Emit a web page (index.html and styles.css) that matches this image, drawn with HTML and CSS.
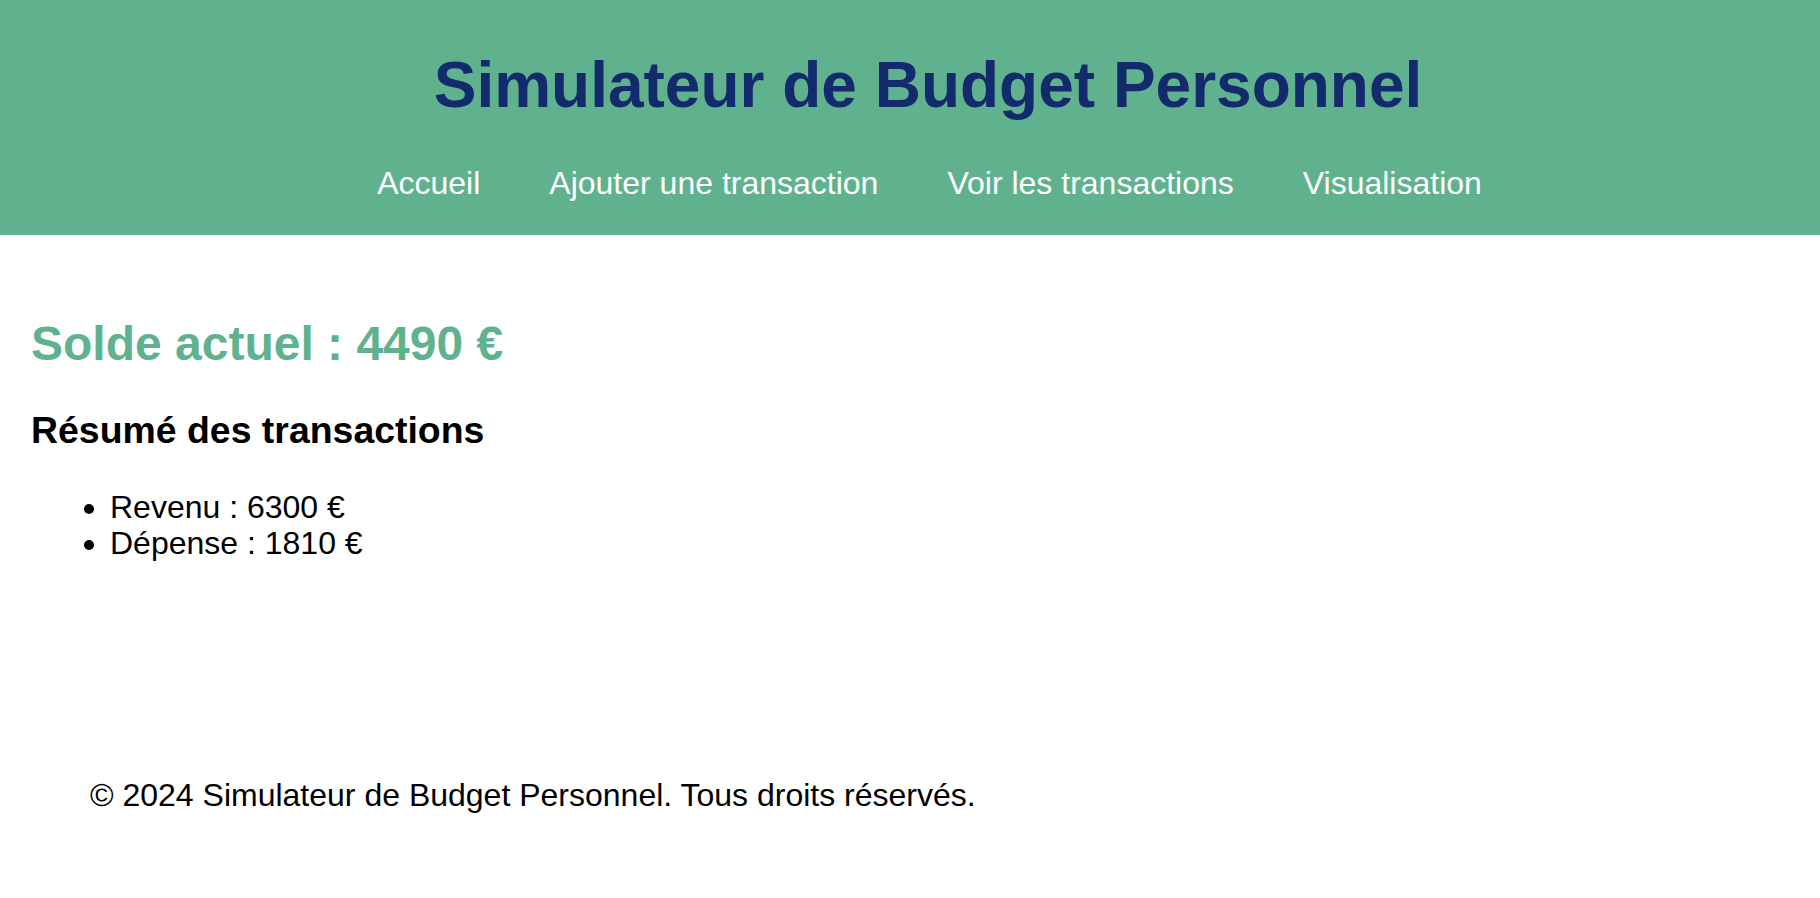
FILE: index.html
```html
<!DOCTYPE html>
<html lang="fr">
<head>
<meta charset="utf-8">
<title>Simulateur de Budget Personnel</title>
<link rel="stylesheet" href="styles.css">
</head>
<body>
<header class="site-header">
  <h1 class="site-title">Simulateur de Budget Personnel</h1>
  <nav class="site-nav">
    <ul class="nav-list">
      <li><a href="#" class="nav-link">Accueil</a></li>
      <li><a href="#" class="nav-link">Ajouter une transaction</a></li>
      <li><a href="#" class="nav-link">Voir les transactions</a></li>
      <li><a href="#" class="nav-link">Visualisation</a></li>
    </ul>
  </nav>
</header>
<main class="content">
  <h2 class="balance">Solde actuel : 4490 €</h2>
  <h3 class="summary-title">Résumé des transactions</h3>
  <ul class="summary-list">
    <li>Revenu : 6300 €</li>
    <li>Dépense : 1810 €</li>
  </ul>
</main>
<footer class="site-footer">
  <p class="footer-text">© 2024 Simulateur de Budget Personnel. Tous droits réservés.</p>
</footer>
</body>
</html>
```

FILE: styles.css
```css
html, body {
  margin: 0;
  padding: 0;
}

body {
  font-family: "Liberation Sans", Arial, Helvetica, sans-serif;
  font-size: 32px;
  color: #000;
  background: #fff;
}

.site-header {
  background: #60b28e;
  padding: 49px 0 34px 36px;
  text-align: center;
}

.site-title {
  margin: 0 0 42px;
  font-size: 64px;
  font-weight: bold;
  line-height: 73.5px;
  color: #132b6d;
}

.site-nav {
  padding-left: 3px;
}

.nav-list {
  list-style: none;
  margin: 0;
  padding: 0;
  display: flex;
  justify-content: center;
  gap: 69px;
  line-height: 36.8px;
}

.nav-link {
  color: #fff;
  text-decoration: none;
}

.content {
  padding: 81px 0 0 31px;
}

.balance {
  margin: 0 0 37.5px;
  font-size: 48px;
  font-weight: bold;
  line-height: 55.2px;
  color: #60b28e;
}

.summary-title {
  margin: 0 0 36.5px;
  font-size: 37.44px;
  font-weight: bold;
  line-height: 43px;
}

.summary-list {
  margin: 0;
  padding-left: 79px;
  line-height: 36.8px;
}

.site-footer {
  margin-top: 214.5px;
  padding-left: 90px;
}

.footer-text {
  margin: 0;
  line-height: 36.8px;
}
```
